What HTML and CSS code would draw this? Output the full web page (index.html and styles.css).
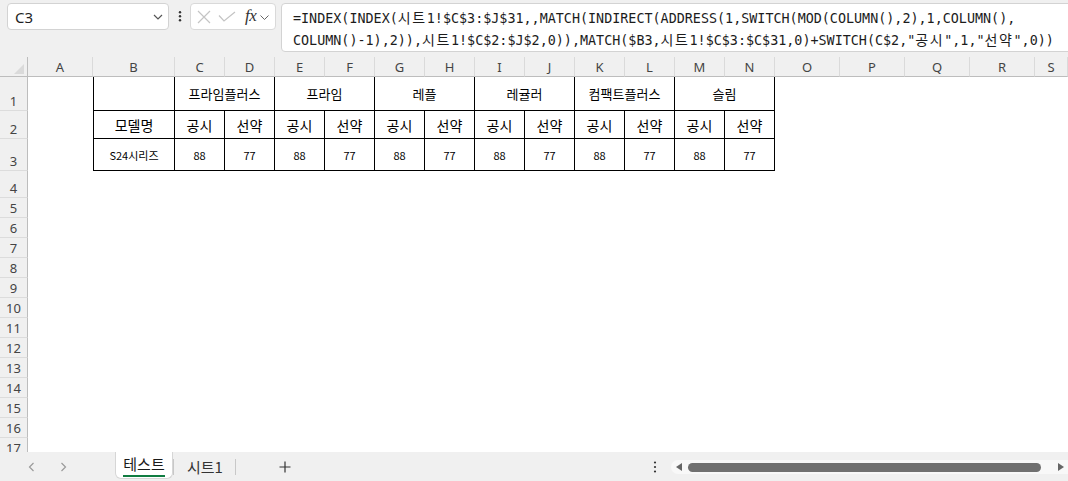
FILE: index.html
```html
<!DOCTYPE html>
<html lang="ko">
<head>
<meta charset="utf-8">
<title>테스트 - 통합 문서</title>
<link rel="stylesheet" href="styles.css">
</head>
<body>
<div class="app">
  <!-- name box + formula bar -->
  <div class="topbar">
    <div class="namebox">
      <span class="ref">C3</span>
      <svg class="chev" width="10" height="6" viewBox="0 0 10 6"><path d="M1 1l4 4 4-4" fill="none" stroke="#555" stroke-width="1.2"/></svg>
    </div>
    <svg class="kebab" width="6" height="14" viewBox="0 0 6 14"><circle cx="3" cy="2.3" r="1.2" fill="#333"/><circle cx="3" cy="6.3" r="1.2" fill="#333"/><circle cx="3" cy="10.3" r="1.2" fill="#333"/></svg>
    <div class="fxbox">
      <svg class="ico" width="14" height="14" viewBox="0 0 14 14"><path d="M1 1l12 12M13 1L1 13" fill="none" stroke="#c4c4c4" stroke-width="1.2"/></svg>
      <svg class="ico" width="18" height="12" viewBox="0 0 18 12"><path d="M1 4.5l5 5.5L17 1" fill="none" stroke="#c4c4c4" stroke-width="1.2"/></svg>
      <span class="fx">fx</span>
      <svg class="ico small" width="9" height="5" viewBox="0 0 9 5"><path d="M0.5 0.5l4 4 4-4" fill="none" stroke="#666" stroke-width="1"/></svg>
    </div>
    <div class="formula">=INDEX(INDEX(<span class="ko">시트</span>1!$C$3:$J$31,,MATCH(INDIRECT(ADDRESS(1,SWITCH(MOD(COLUMN(),2),1,COLUMN(),<br>COLUMN()-1),2)),<span class="ko">시트</span>1!$C$2:$J$2,0)),MATCH($B3,<span class="ko">시트</span>1!$C$3:$C$31,0)+SWITCH(C$2,"<span class="ko">공시</span>",1,"<span class="ko">선약</span>",0))</div>
  </div>

  <!-- worksheet grid -->
  <div class="sheet">
    <div class="grid">
      <div class="corner"><span class="tri"></span></div>
      <div class="ch">A</div><div class="ch">B</div><div class="ch">C</div><div class="ch">D</div>
      <div class="ch">E</div><div class="ch">F</div><div class="ch">G</div><div class="ch">H</div>
      <div class="ch">I</div><div class="ch">J</div><div class="ch">K</div><div class="ch">L</div>
      <div class="ch">M</div><div class="ch">N</div><div class="ch">O</div><div class="ch">P</div>
      <div class="ch">Q</div><div class="ch">R</div><div class="ch">S</div>

      <div class="rh">1</div>
      <div class="c"></div>
      <div class="t first"></div>
      <div class="t r1 m">프라임플러스</div>
      <div class="t r1 m">프라임</div>
      <div class="t r1 m">레플</div>
      <div class="t r1 m">레귤러</div>
      <div class="t r1 m">컴팩트플러스</div>
      <div class="t r1 m">슬림</div>
      <div class="fill"></div>

      <div class="rh">2</div>
      <div class="c"></div>
      <div class="t first r2">모델명</div>
      <div class="t r2">공시</div><div class="t r2">선약</div>
      <div class="t r2">공시</div><div class="t r2">선약</div>
      <div class="t r2">공시</div><div class="t r2">선약</div>
      <div class="t r2">공시</div><div class="t r2">선약</div>
      <div class="t r2">공시</div><div class="t r2">선약</div>
      <div class="t r2">공시</div><div class="t r2">선약</div>
      <div class="fill"></div>

      <div class="rh">3</div>
      <div class="c"></div>
      <div class="t first r3">S24시리즈</div>
      <div class="t r3">88</div><div class="t r3">77</div>
      <div class="t r3">88</div><div class="t r3">77</div>
      <div class="t r3">88</div><div class="t r3">77</div>
      <div class="t r3">88</div><div class="t r3">77</div>
      <div class="t r3">88</div><div class="t r3">77</div>
      <div class="t r3">88</div><div class="t r3">77</div>
      <div class="fill"></div>

      <div class="rh">4</div><div class="blank"></div>
      <div class="rh">5</div><div class="blank"></div>
      <div class="rh">6</div><div class="blank"></div>
      <div class="rh">7</div><div class="blank"></div>
      <div class="rh">8</div><div class="blank"></div>
      <div class="rh">9</div><div class="blank"></div>
      <div class="rh">10</div><div class="blank"></div>
      <div class="rh">11</div><div class="blank"></div>
      <div class="rh">12</div><div class="blank"></div>
      <div class="rh">13</div><div class="blank"></div>
      <div class="rh">14</div><div class="blank"></div>
      <div class="rh">15</div><div class="blank"></div>
      <div class="rh">16</div><div class="blank"></div>
      <div class="rh">17</div><div class="blank"></div>
    </div>
  </div>

  <!-- sheet tabs + horizontal scrollbar -->
  <div class="tabbar">
    <div class="nav">
      <svg width="7" height="10" viewBox="0 0 7 10"><path d="M5.5 1L1.5 5l4 4" fill="none" stroke="#9a9a9a" stroke-width="1.2"/></svg>
      <svg width="7" height="10" viewBox="0 0 7 10"><path d="M1.5 1l4 4-4 4" fill="none" stroke="#9a9a9a" stroke-width="1.2"/></svg>
    </div>
    <div class="tab active"><span>테스트</span></div>
    <span class="sep"></span>
    <div class="tab">시트1</div>
    <span class="sep"></span>
    <svg class="plus" width="12" height="12" viewBox="0 0 12 12"><path d="M6 0.5v11M0.5 6h11" fill="none" stroke="#333" stroke-width="1.2"/></svg>
    <svg class="vdots" width="4" height="12" viewBox="0 0 4 12"><circle cx="2" cy="1.5" r="1.1" fill="#333"/><circle cx="2" cy="6" r="1.1" fill="#333"/><circle cx="2" cy="10.5" r="1.1" fill="#333"/></svg>
    <div class="track">
      <svg width="6" height="8" viewBox="0 0 6 8"><path d="M6 0v8L0 4z" fill="#666"/></svg>
      <div class="thumb"></div>
      <svg width="6" height="8" viewBox="0 0 6 8"><path d="M0 0v8l6-4z" fill="#666"/></svg>
    </div>
  </div>
</div>
</body>
</html>
```
FILE: styles.css
```css
html, body {
  margin: 0;
  padding: 0;
  overflow: hidden;
}

body {
  width: 1068px;
  height: 481px;
  background: #f0f0f0;
  font-family: "Noto Sans", "Noto Sans CJK KR", sans-serif;
  color: #222;
}

.app {
  display: flex;
  flex-direction: column;
  height: 481px;
}

/* ---------- formula bar ---------- */
.topbar {
  height: 57px;
  display: flex;
  align-items: flex-start;
  padding: 3px 0 0 7px;
  box-sizing: border-box;
  flex: none;
}

.namebox {
  width: 162px;
  height: 27px;
  box-sizing: border-box;
  background: #fff;
  border: 1px solid #d3d3d3;
  border-radius: 4px;
  display: flex;
  align-items: center;
  justify-content: space-between;
  padding: 0 5px 0 7px;
}

.namebox .ref {
  font-size: 15px;
  color: #1f1f1f;
}

.kebab {
  margin: 7px 7px 0 8px;
}

.fxbox {
  width: 86px;
  height: 27px;
  box-sizing: border-box;
  background: #fff;
  border: 1px solid #d9d9d9;
  border-radius: 4px;
  display: flex;
  align-items: center;
  padding: 0 0 0 6px;
}

.fxbox .ico {
  margin-right: 7px;
}

.fxbox .ico.small {
  margin: 1px 0 0 2px;
}

.fx {
  font-family: "Liberation Serif", serif;
  font-style: italic;
  font-size: 17px;
  color: #333;
  margin: -2px 2px 0 2px;
  letter-spacing: -0.5px;
}

.formula {
  flex: 1;
  margin-left: 5px;
  margin-right: -12px;
  height: 49px;
  box-sizing: border-box;
  background: #fff;
  border: 1px solid #d3d3d3;
  border-radius: 4px;
  padding: 3px 0 0 11px;
  font-family: "DejaVu Sans Mono", "Noto Sans CJK KR", monospace;
  font-size: 13.4px;
  line-height: 21px;
  white-space: nowrap;
  overflow: hidden;
  color: #1c1c1c;
}

.formula .ko {
  font-family: "Noto Sans CJK KR", sans-serif;
  font-size: 14px;
  letter-spacing: 1.6px;
}

/* ---------- worksheet ---------- */
.sheet {
  height: 395px;
  overflow: hidden;
  background: #fff;
  flex: none;
}

.grid {
  display: grid;
  grid-template-columns: 28px 65px 82px repeat(12, 50px) repeat(4, 65px) 1fr;
  grid-template-rows: 20px 34px 28px 32px 27px repeat(13, 20px);
}

.corner {
  background: #f0f0f0;
  border-right: 1px solid #bdbdbd;
  border-bottom: 1px solid #bdbdbd;
  position: relative;
}

.corner .tri {
  position: absolute;
  right: 3px;
  bottom: 2px;
  width: 0;
  height: 0;
  border-left: 10px solid transparent;
  border-bottom: 10px solid #dadada;
}

.ch {
  background: #f0f0f0;
  border-right: 1px solid #dadada;
  border-bottom: 1px solid #bdbdbd;
  font-size: 13px;
  color: #444;
  display: flex;
  align-items: center;
  justify-content: center;
}

.rh {
  grid-column: 1;
  background: #f0f0f0;
  border-right: 1px solid #bdbdbd;
  border-bottom: 1px solid #dcdcdc;
  font-size: 13px;
  color: #444;
  display: flex;
  align-items: flex-end;
  justify-content: center;
  line-height: 18px;
}

.blank {
  grid-column: 2 / -1;
}

.fill {
  grid-column: 16 / -1;
}

/* bordered data table B1:N3 */
.t {
  border-right: 1px solid #000;
  border-bottom: 1px solid #000;
  display: flex;
  align-items: center;
  justify-content: center;
  font-family: "Noto Sans CJK KR", sans-serif;
  color: #000;
  white-space: nowrap;
}

.t.first {
  border-left: 1px solid #000;
}

.t.m {
  grid-column: span 2;
}

.r1 {
  font-size: 13px;
}

.r2 {
  font-size: 14px;
}

.r3 {
  font-size: 11px;
}

/* ---------- sheet tabs ---------- */
.tabbar {
  height: 29px;
  flex: none;
  display: flex;
  align-items: center;
  position: relative;
}

.nav {
  width: 115px;
  height: 29px;
  display: flex;
  align-items: center;
  padding-left: 28px;
  box-sizing: border-box;
  gap: 25px;
}

.tab {
  height: 27px;
  box-sizing: border-box;
  display: flex;
  align-items: center;
  font-family: "Noto Sans CJK KR", sans-serif;
  font-size: 15px;
  color: #333;
  padding: 0 12px 0 13px;
}

.tab.active {
  align-self: flex-start;
  width: 58px;
  height: 27px;
  padding: 0;
  justify-content: center;
  background: #fff;
  border: 1px solid #d6d6d6;
  border-top: none;
  border-radius: 0 0 6px 6px;
  color: #1a1a1a;
}

.tab.active span {
  padding-bottom: 3px;
  border-bottom: 2px solid #107c41;
  margin-top: 2px;
  line-height: 17px;
  width: 42px;
  text-align: center;
}

.sep {
  width: 1px;
  height: 16px;
  background: #c8c8c8;
  margin-left: 4px;
}

.tab + .sep {
  margin-left: 0;
}

.plus {
  margin-left: 43px;
  margin-top: 1px;
}

.vdots {
  margin-left: 362px;
  margin-top: 1px;
}

.track {
  margin-left: 14px;
  flex: 1;
  margin-right: -14px;
  height: 14px;
  background: #f8f8f8;
  border-radius: 7px;
  display: flex;
  align-items: center;
  padding-left: 5px;
  gap: 6px;
  margin-top: 1px;
}

.thumb {
  width: 353px;
  height: 9px;
  border-radius: 4.5px;
  background: #707070;
}

.track svg:last-child {
  margin-left: 11px;
}
```
